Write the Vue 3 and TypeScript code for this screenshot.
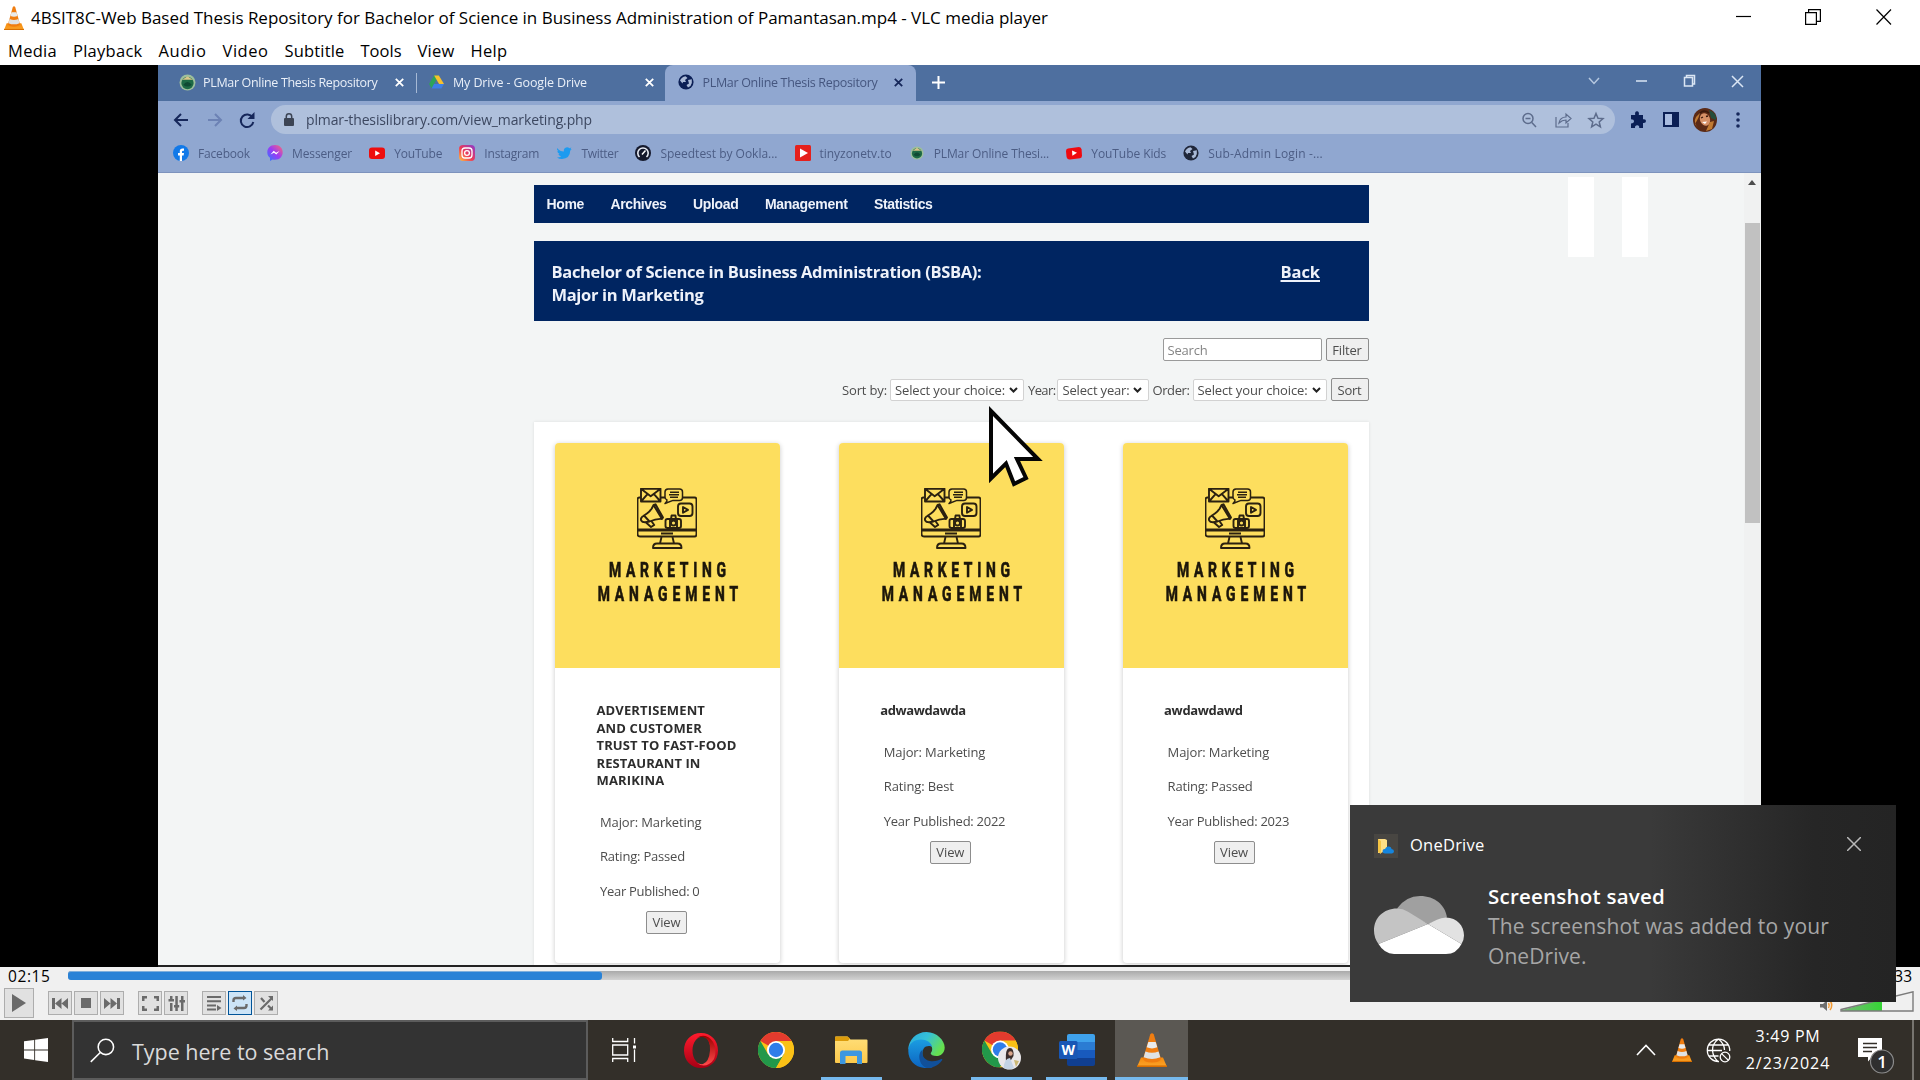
<script setup lang="ts">
import type { Directive } from 'vue'

// Tracks a label out (or in) so that it fills the given advance width.
const vFit: Directive<HTMLElement, number> = {
  mounted(el, binding) {
    el.style.letterSpacing = '0px'
    const natural = el.getBoundingClientRect().width
    const count = (el.textContent ?? '').trim().length
    if (count > 0) el.style.letterSpacing = `${(binding.value - natural) / count}px`
  },
}

interface Label { text: string; w: number }
interface Bookmark extends Label { icon: string }
interface Thesis { title: Label[]; details: Label[] }

const menu: Label[] = [
  { text: 'Media', w: 49 }, { text: 'Playback', w: 69.5 }, { text: 'Audio', w: 48 }, { text: 'Video', w: 46 },
  { text: 'Subtitle', w: 60 }, { text: 'Tools', w: 41 }, { text: 'View', w: 37 }, { text: 'Help', w: 37 },
]

const bookmarks: Bookmark[] = [
  { icon: 'facebook', text: 'Facebook', w: 52 },
  { icon: 'messenger', text: 'Messenger', w: 60 },
  { icon: 'youtube', text: 'YouTube', w: 48 },
  { icon: 'instagram', text: 'Instagram', w: 55 },
  { icon: 'twitter', text: 'Twitter', w: 37 },
  { icon: 'speedtest', text: 'Speedtest by Ookla...', w: 117 },
  { icon: 'tiny', text: 'tinyzonetv.to', w: 72 },
  { icon: 'plmar', text: 'PLMar Online Thesi...', w: 115.5 },
  { icon: 'kids', text: 'YouTube Kids', w: 75 },
  { icon: 'globe', text: 'Sub-Admin Login -...', w: 114.5 },
]

const siteNav: Label[] = [
  { text: 'Home', w: 37.5 }, { text: 'Archives', w: 56 }, { text: 'Upload', w: 45.5 },
  { text: 'Management', w: 82.5 }, { text: 'Statistics', w: 58.5 },
]

const theses: Thesis[] = [
  {
    title: [
      { text: 'ADVERTISEMENT', w: 108.5 }, { text: 'AND CUSTOMER', w: 105.5 }, { text: 'TRUST TO FAST-FOOD', w: 140 },
      { text: 'RESTAURANT IN', w: 104 }, { text: 'MARIKINA', w: 68 },
    ],
    details: [{ text: 'Major: Marketing', w: 101.5 }, { text: 'Rating: Passed', w: 85 }, { text: 'Year Published: 0', w: 99.5 }],
  },
  {
    title: [{ text: 'adwawdawda', w: 85.5 }],
    details: [{ text: 'Major: Marketing', w: 101.5 }, { text: 'Rating: Best', w: 70 }, { text: 'Year Published: 2022', w: 121.5 }],
  },
  {
    title: [{ text: 'awdawdawd', w: 78.5 }],
    details: [{ text: 'Major: Marketing', w: 101.5 }, { text: 'Rating: Passed', w: 85 }, { text: 'Year Published: 2023', w: 121.5 }],
  },
]
</script>

<template>
  <div class="desktop">
    <svg class="symbols" width="0" height="0" aria-hidden="true">
      <defs>
        <linearGradient id="coneBase" x1="0" y1="0" x2="0" y2="1"><stop offset="0" stop-color="#f58a0c" /><stop offset="1" stop-color="#fba52b" /></linearGradient>
        <linearGradient id="ig" x1="0" y1="1" x2="1" y2="0"><stop offset="0" stop-color="#fdc442" /><stop offset=".45" stop-color="#ee3a55" /><stop offset="1" stop-color="#8a3bd0" /></linearGradient>
        <linearGradient id="ms" x1="0" y1="1" x2="1" y2="0"><stop offset="0" stop-color="#2a7bff" /><stop offset=".5" stop-color="#9a3bf5" /><stop offset="1" stop-color="#ff6a70" /></linearGradient>
        <linearGradient id="op" x1="0" y1="0" x2="0" y2="1"><stop offset="0" stop-color="#ff1b2d" /><stop offset="1" stop-color="#a70014" /></linearGradient>
        <linearGradient id="op2" x1="0" y1="0" x2="0" y2="1"><stop offset="0" stop-color="#9c0000" /><stop offset="1" stop-color="#ff4b4b" /></linearGradient>
        <linearGradient id="edTop" x1="0" y1="0" x2="1" y2=".5"><stop offset="0" stop-color="#2aa9dc" /><stop offset=".5" stop-color="#35c1d8" /><stop offset="1" stop-color="#66e04f" /></linearGradient>
        <linearGradient id="edLow" x1="0" y1="0" x2="0" y2="1"><stop offset="0" stop-color="#1b9de2" /><stop offset="1" stop-color="#0c63c0" /></linearGradient>
        <linearGradient id="folder" x1="0" y1="0" x2="0" y2="1"><stop offset="0" stop-color="#ffdf7a" /><stop offset="1" stop-color="#fcc94b" /></linearGradient>
        <linearGradient id="vol" x1="0" y1="0" x2="1" y2="0"><stop offset="0" stop-color="#79b879" /><stop offset="1" stop-color="#35d435" /></linearGradient>
      </defs>
      <symbol id="cone" viewBox="0 0 30 34" preserveAspectRatio="none">
        <path d="M4 24.500h22L30 34H0z" fill="url(#coneBase)" />
        <path d="M0 32.400h30V34H0z" fill="#d96f00" />
        <path d="M13.200 1.500Q15-1 16.800 1.500L24 26Q22.500 29.500 15 29.500T6 26z" fill="#f07d10" />
        <path d="M11.300 9h7.400l1.600 5.300q-5.300 2.200-10.600 0z" fill="#e9ebec" />
        <path d="M8.400 18.500q6.600 2.500 13.200 0l1.700 5.800q-8.300 3.400-16.600 0z" fill="#dfe2e4" />
      </symbol>
      <symbol id="globe" viewBox="0 0 16 16">
        <circle cx="8" cy="8" r="7.600" fill="currentColor" />
        <path d="M2 6.500Q3.500 3 7.500 2.200L9.500 4 7 6l1 2H5l-.5 1.500zM10 6l3.800-.8Q14.500 9 12.500 12L10 13.500 8.500 11 11 9.500z" fill="#a9b9d6" />
      </symbol>
      <symbol id="seal" viewBox="0 0 16 16">
        <circle cx="8" cy="8" r="7.500" fill="#9dbf9c" /><circle cx="8" cy="8.500" r="5.800" fill="#1d6a45" />
        <path d="M3 5.500 8 2l5 3.500z" fill="#d8c58a" /><path d="M4 10q4-5 8 0-4 3.500-8 0" fill="#0f4a33" />
      </symbol>
      <symbol id="chrome" viewBox="0 0 36 36">
        <circle cx="18" cy="18" r="18" fill="#fbc116" />
        <path d="M18 18 2.400 9A18 18 0 0 1 33.600 9z" fill="#e33b2e" />
        <path d="M2.400 9A18 18 0 0 0 18 36l8-14-8-4-7.800 4.500z" fill="#22984a" />
        <path d="M18 9h15.600A18 18 0 0 1 18 36l7.800-13.500z" fill="#fbc116" />
        <circle cx="18" cy="18" r="9" fill="#fff" /><circle cx="18" cy="18" r="7.200" fill="#2f7de9" />
      </symbol>
    </svg>

    <header class="titlebar">
      <svg class="app-icon" width="20" height="24"><use href="#cone" width="20" height="24" /></svg>
      <span v-fit="1017" class="app-title">4BSIT8C-Web Based Thesis Repository for Bachelor of Science in Business Administration of Pamantasan.mp4 - VLC media player</span>
      <svg class="window-buttons" width="156" height="16" viewBox="0 0 156 16" fill="none" stroke="#000" stroke-width="1.200">
        <path d="M0 7.500h15" /><path d="M69.600 3.600h10.800v11.800H69.600zM72.600 3.600V.6h11.800v11.800h-4" /><path d="m140.500.5 14.500 15M155 .5l-14.500 15" />
      </svg>
    </header>
    <nav class="menubar">
      <span v-for="m in menu" :key="m.text" v-fit="m.w">{{ m.text }}</span>
    </nav>

    <main class="stage">
      <section class="browser">
        <div class="tabs">
          <div class="tab first">
            <svg width="17" height="17"><use href="#seal" width="17" height="17" /></svg>
            <span v-fit="174.500">PLMar Online Thesis Repository</span>
            <svg class="x" width="9" height="9" viewBox="0 0 9 9"><path d="m.8.8 7.400 7.400M8.200.8.8 8.200" /></svg>
          </div>
          <div class="tab second">
            <svg width="15" height="14" viewBox="0 0 17 15"><path d="M5.800 0h5.400L6 9.300 3 14.500 0 9.800z" fill="#2da35a" /><path d="M5.800 0h5.400L17 9.800h-5.600z" fill="#f6c02d" /><path d="M5.700 9.800H17l-3 5H3z" fill="#3d7fe6" /></svg>
            <span v-fit="134">My Drive - Google Drive</span>
            <svg class="x" width="9" height="9" viewBox="0 0 9 9"><path d="m.8.8 7.400 7.400M8.200.8.8 8.200" /></svg>
          </div>
          <div class="tab current">
            <svg class="navy" width="16" height="16"><use href="#globe" width="16" height="16" /></svg>
            <span v-fit="175">PLMar Online Thesis Repository</span>
            <svg class="x" width="9" height="9" viewBox="0 0 9 9"><path d="m.8.8 7.400 7.400M8.200.8.8 8.200" /></svg>
          </div>
          <svg class="plus" width="13" height="13" viewBox="0 0 13 13"><path d="M6.500 0v13M0 6.500h13" stroke="#fff" stroke-width="2" /></svg>
          <svg class="chrome-buttons" width="156" height="14" viewBox="0 0 156 14" fill="none" stroke="#dbe6f4" stroke-width="1.500">
            <path d="m1 4 5 5.500L11 4" stroke="#b6c8e0" /><path d="M48 7h11" /><path d="M96.500 3.500h8v8.500h-8zM98.500 3V1.500h8V10H105" /><path d="m144 2 11 11M155 2l-11 11" />
          </svg>
        </div>

        <div class="toolbar">
          <svg class="nav-icons" width="82" height="18" viewBox="0 0 82 18" fill="none" stroke-width="2">
            <path d="M15 9H2.500M8 3 2 9l6 6" stroke="#16275a" /><path d="M35 9h12.500M42 3l6 6-6 6" stroke="#6c82b4" />
            <path d="M79.500 6.500A6.300 6.300 0 1 0 80.300 11" stroke="#16275a" /><path d="M81.500 1v7h-7z" fill="#16275a" />
          </svg>
          <div class="omnibox">
            <svg width="10" height="13" viewBox="0 0 10 13"><rect y="5" width="10" height="8" rx="1" fill="#3c4454" /><path d="M2.300 6V3.500a2.700 2.700 0 0 1 5.400 0V6" fill="none" stroke="#3c4454" stroke-width="1.500" /></svg>
            <span v-fit="286" class="url">plmar-thesislibrary.com/view_marketing.php</span>
            <svg class="omni-icons" width="84" height="18" viewBox="0 0 84 18" fill="none" stroke="#5d6c8c" stroke-width="1.500">
              <circle cx="7" cy="7.500" r="5" /><path d="m10.800 11.500 4.200 4.500M4.500 7.500h5" />
              <path d="M35 6v10h12v-4M38 12q1-6 7-6V3l5 4.500-5 4.500V9q-4 0-7 3z" stroke-width="1.200" />
              <path d="m75 2.500 2 4.700 5 .4-3.800 3.300 1.200 5-4.400-2.700-4.400 2.700 1.200-5L68 7.600l5-.4z" />
            </svg>
          </div>
          <svg class="puzzle" width="16" height="17" viewBox="0 0 16 17"><path d="M1 4h4.200q-.7-3.800 1.800-3.800T8.800 4H13v4.300q3-.6 3 1.700t-3 1.900V17H9.200q.4-2.800-2-2.800T5 17H1v-4.500q3-.2 3-2.200T1 8.200z" fill="#0b1f55" /></svg>
          <svg class="side" width="16" height="15" viewBox="0 0 16 15"><rect x="1" y="1" width="14" height="13" fill="#a9bce0" stroke="#0b1f55" stroke-width="2" /><path d="M9 1h6v13H9z" fill="#0b1f55" /></svg>
          <svg class="face" width="24" height="24" viewBox="0 0 24 24"><circle cx="12" cy="12" r="12" fill="#5b2a16" /><path d="M16 2q8 3 7 10l-5-2z" fill="#254d3b" /><ellipse cx="12" cy="11.500" rx="5" ry="6.500" fill="#d69067" transform="rotate(-20 12 11.500)" /><path d="M2 16Q6 10 7 5L3 9Q0 14 5 20zM13 23l6-2 2-8-4 1z" fill="#c07a32" /><path d="m8 10 2-1M13 8.500l2-.5M7 5q4-4 9 0" stroke="#3a180c" stroke-width="1.300" fill="none" /><path d="m9 14 5-.5-2 2.500z" fill="#fff" /></svg>
          <svg class="dots" width="4" height="16" viewBox="0 0 4 16" fill="#16275a"><circle cx="2" cy="2" r="1.800" /><circle cx="2" cy="8" r="1.800" /><circle cx="2" cy="14" r="1.800" /></svg>
        </div>

        <div class="bookmarks">
          <div v-for="b in bookmarks" :key="b.text" class="bookmark">
            <svg width="16" height="16" viewBox="0 0 16 16">
              <g v-if="b.icon === 'facebook'"><circle cx="8" cy="8" r="8" fill="#1279e8" /><path d="M6.800 16v-5.500H5V8h1.800V6.300q0-2.800 2.800-2.800H11v2.300h-1q-1 0-1 1V8h2l-.4 2.500H9V16z" fill="#fff" /></g>
              <g v-else-if="b.icon === 'messenger'"><path d="M8 0C3 0 .3 3.400.3 7.200c0 2.500 1 4.300 2.700 5.600V16l2.600-1.500q1.200.3 2.400.3c5 0 7.700-3.600 7.700-7.500S13 0 8 0" fill="url(#ms)" /><path d="m3.500 9.500 3.200-3.800 2.400 2L12.500 6 9.300 9.600 7 7.800z" fill="#fff" /></g>
              <g v-else-if="b.icon === 'youtube'"><rect y="2.500" width="16" height="11.500" rx="3" fill="#ee0d0d" /><path d="M6.200 5.500v5.400L11 8.200z" fill="#fff" /></g>
              <g v-else-if="b.icon === 'instagram'"><rect width="16" height="16" rx="4" fill="url(#ig)" /><rect x="3" y="3" width="10" height="10" rx="3" fill="none" stroke="#fff" stroke-width="1.300" /><circle cx="8" cy="8" r="2.400" fill="none" stroke="#fff" stroke-width="1.300" /></g>
              <path v-else-if="b.icon === 'twitter'" d="M1 3q3 3.500 6.800 3.500Q7.500 2.500 11 2.200q1.500 0 2.400 1l2-.6-1 1.700 1.300-.2-1.500 1.600Q14 13.500 6 14q-3 0-5-1.500 2.800 0 4.200-1.300-2.400-.5-2.800-2.200h1.300Q1.300 8 1.300 5.800l1.300.3Q.4 5 1 3" fill="#1d9bf0" />
              <g v-else-if="b.icon === 'speedtest'"><circle cx="8" cy="8" r="8" fill="#15192c" /><path d="M4.500 12A5.200 5.200 0 1 1 11.500 12" fill="none" stroke="#e8ecf4" stroke-width="1.600" /><path d="m7 9.500 3.500-4" stroke="#fff" stroke-width="1.500" /></g>
              <g v-else-if="b.icon === 'tiny'"><rect width="16" height="16" rx="1.500" fill="#e5201c" /><path d="M5 3.500v9L13 8z" fill="#fff" /></g>
              <use v-else-if="b.icon === 'plmar'" href="#seal" x="1" y="1" width="14" height="14" />
              <g v-else-if="b.icon === 'kids'"><path d="M2 3.500 13 2q2.300 0 2.600 2.500l.4 6q0 2.500-2 2.800L4 14.500q-3 .3-3.500-3L0 6q0-2.200 2-2.500" fill="#f0090f" /><path d="m6 5.500.4 5.200L11 7.800z" fill="#fff" /></g>
              <use v-else href="#globe" width="16" height="16" class="dark" />
            </svg>
            <span v-fit="b.w">{{ b.text }}</span>
          </div>
        </div>

        <div class="page">
          <div class="content">
            <nav class="site-nav"><a v-for="n in siteNav" :key="n.text" v-fit="n.w">{{ n.text }}</a></nav>
            <div class="banner">
              <h1><span v-fit="430">Bachelor of Science in Business Administration (BSBA):</span><br><span v-fit="152">Major in Marketing</span></h1>
              <a class="back"><span v-fit="39.500">Back</span></a>
            </div>
            <div class="search-row">
              <div class="field"><span v-fit="40">Search</span></div>
              <div class="btn filter"><span v-fit="29.500">Filter</span></div>
            </div>
            <div class="sort-row">
              <span v-fit="45">Sort by:</span>
              <div class="select s1"><span v-fit="110">Select your choice:</span><svg width="9" height="6" viewBox="0 0 9 6"><path d="m1 1 3.500 3.500L8 1" /></svg></div>
              <span v-fit="27.500">Year:</span>
              <div class="select s2"><span v-fit="67">Select year:</span><svg width="9" height="6" viewBox="0 0 9 6"><path d="m1 1 3.500 3.500L8 1" /></svg></div>
              <span v-fit="37">Order:</span>
              <div class="select s3"><span v-fit="110">Select your choice:</span><svg width="9" height="6" viewBox="0 0 9 6"><path d="m1 1 3.500 3.500L8 1" /></svg></div>
              <div class="btn sort"><span v-fit="24">Sort</span></div>
            </div>

            <div class="panel">
              <article v-for="(t, i) in theses" :key="i" class="card">
                <div class="cover">
                  <svg class="emblem" width="60" height="61" viewBox="0 0 60 61" fill="none" stroke="#2b2110" stroke-width="1.900" stroke-linejoin="round">
                    <path d="M3.500 9.500H2.500q-2 0-2 2V46q0 2.500 2.500 2.500h54.500q2 0 2-2.500V11.500q0-2-2-2H46M24 9.500h4" /><path d="M.5 42h59" stroke-width="2.800" /><path d="M24 45.500h12" />
                    <path d="m24.500 49-1.500 6.500h14L35.500 49M16 60q0-4.500 4-4.500h20.500q4 0 4 4.500z" />
                    <path d="M4 .8h19.500v12.700H4zM4 .8l9.700 7.400L23.500.8M4 13.500l6.500-7.300M23.500 13.500 17 6.200" />
                    <path d="M31 .9h11.500q3 0 3 3v5.500q0 3-3 3H36L28 15.500q2.300-2 2-3.600-2-.8-2-3V4q0-3 3-3.100zM33 4.200h9M32 6.800h10M33 9.300h8" stroke-width="1.500" />
                    <path d="M16.500 17 25 31q-5.500-.6-12.500 2.500L7 27.500Q14.500 23 16.500 17zM16.500 17l2-.7L26 29.500 25 31M7 27.500q-4 2.300-2.800 5 1.500 3 8.300 1M9 34.500l5 4.500 3.200-2-3-4.300" />
                    <rect x="41" y="15.500" width="14.500" height="12.500" rx="3" /><path d="M46 19v5.800l5-2.900z" />
                    <rect x="28.500" y="31" width="15.500" height="9" rx="2" /><path d="M33 31v9M40 31v9M34 31l.6-3.500h3.800L39 31" /><circle cx="36.500" cy="35" r="2.500" />
                  </svg>
                  <svg class="wordmark" width="150" height="46" viewBox="0 0 150 46">
                    <text x="17.600" y="17" textLength="172" transform="scale(.68 1)">MARKETING</text>
                    <text x="1" y="41.500" textLength="206.500" transform="scale(.68 1)">MANAGEMENT</text>
                  </svg>
                </div>
                <h2><template v-for="l in t.title" :key="l.text"><span v-fit="l.w">{{ l.text }}</span><br></template></h2>
                <p v-for="d in t.details" :key="d.text"><span v-fit="d.w">{{ d.text }}</span></p>
                <div class="btn view"><span v-fit="28">View</span></div>
              </article>
            </div>
          </div>
          <div class="scrollbar">
            <svg width="8" height="5" viewBox="0 0 8 5"><path d="M0 5 4 0l4 5z" fill="#4c4c4c" /></svg>
            <div class="thumb" />
          </div>
        </div>
      </section>

      <div class="pause"><i /><i /></div>
      <svg class="pointer" width="58" height="84" viewBox="0 0 58 84"><path d="M4 5v67.500L19 57.500l8 20.500 12-6-9-19H51z" fill="#fff" stroke="#050505" stroke-width="4" /></svg>
    </main>

    <section class="controls">
      <div class="seek">
        <span v-fit="42.500" class="time">02:15</span>
        <div class="track"><div class="done" /></div>
        <span class="time">05:33</span>
      </div>
      <div class="buttons">
        <div class="cb play"><svg width="16" height="18" viewBox="0 0 16 18"><path d="M1 0v18l14-9z" /></svg></div>
        <div class="cb g14"><svg width="16" height="11" viewBox="0 0 16 11"><path d="M0 0h3v11H0zM3 5.500 9.500 0v11zM9.500 5.500 16 0v11z" /></svg></div>
        <div class="cb g2"><svg width="10" height="10" viewBox="0 0 10 10"><path d="M0 0h10v10H0z" /></svg></div>
        <div class="cb g2"><svg width="16" height="11" viewBox="0 0 16 11"><path d="M13 0h3v11h-3zM13 5.500 6.500 0v11zM6.500 5.500 0 0v11z" /></svg></div>
        <div class="cb g14"><svg width="17" height="15" viewBox="0 0 17 15"><path d="M0 0h5v2.500H2.500V5H0zM12 0h5v5h-2.500V2.500H12zM0 10h2.500v2.500H5V15H0zM14.500 10H17v5h-5v-2.500h2.500z" /></svg></div>
        <div class="cb g2"><svg width="17" height="15" viewBox="0 0 17 15"><path d="M2 0h2.500v3H6v2.500H.5V3H2zM2 7h2.500v8H2zM7.300 0h2.500v9h1.400v2.500H9.800V15H7.300v-3.500H6V9h1.300zM13 0h2.500v4H17v2.500h-1.500V15H13V6.500h-1.500V4H13z" /></svg></div>
        <div class="cb g14"><svg width="16" height="15" viewBox="0 0 16 15"><path d="M1 0h14v2H1zM1 4.200h14v2H1zM1 8.400h9v2H1zM1 12.600h9v2H1zM11 9l4.500 3-4.500 3z" /></svg></div>
        <div class="cb g2 on"><svg width="16" height="16" viewBox="0 0 16 16"><path d="M1.500 7V5.500q0-2.500 2.500-2.500h8M14.500 9v1.500q0 2.500-2.500 2.500H4" fill="none" stroke="#6a6a6a" stroke-width="2.400" /><path d="M11 0v5.500L14.500 3zM5 10.500V16l-3.500-2.500z" /></svg></div>
        <div class="cb g2"><svg width="15" height="15" viewBox="0 0 15 15"><path d="m1.500 13.500 11-11M2 2l3.500 4M9 9.500l4 4" fill="none" stroke="#6a6a6a" stroke-width="2.200" /><path d="M9 0h5v5zM9 14.500h5v-5z" /></svg></div>
        <svg class="volume" width="96" height="24" viewBox="0 0 96 24">
          <path d="M0 13h3l4-4v11l-4-3.500H0z" fill="#6e6e6e" /><path d="M8.500 12q1.500 2.500 0 5M10 9.500q3.500 5 0 9.500" fill="none" stroke="#f39a32" stroke-width="1.500" />
          <text x="21" y="10">70%</text>
          <path d="M22 19 62 8v12H22z" fill="url(#vol)" /><path d="M21 18.500 93 .8V20H21z" fill="none" stroke="#7b7b7b" stroke-width="1.400" />
        </svg>
      </div>
    </section>

    <footer class="taskbar">
      <svg class="start" width="24" height="24" viewBox="0 0 24 24" fill="#fff"><path d="M0 3.300 10.200 1.900v9.600H0zM11.100 1.700 24 0v11.500H11.100zM0 12.400h10.200V22L0 20.600zM11.100 12.400H24V24l-12.900-1.800z" /></svg>
      <div class="searchbox">
        <svg width="25" height="25" viewBox="0 0 26 25" fill="none" stroke="#fff" stroke-width="1.600"><circle cx="16.500" cy="8.800" r="8" /><path d="M10.700 14.500.8 24.300" /></svg>
        <span v-fit="197.500">Type here to search</span>
      </div>
      <svg class="taskview" width="25" height="24" viewBox="0 0 25 24" fill="none" stroke="#fff" stroke-width="1.300"><path d="M.7 0v3.500h15V0M.7 24v-3.500h15V24M.7 7h15v10H.7zM22.500 0v5.500M22.500 11.500V24" /><path d="M21 7.500h3v3h-3z" fill="#fff" stroke="none" /></svg>
      <div class="slot opera"><svg width="34" height="35" viewBox="0 0 34 35"><path fill-rule="evenodd" d="M17 0C7 0 0 7.500 0 17.500S7 35 17 35s17-7.500 17-17.500S27 0 17 0m2 3.500c4.500 0 7.500 6 7.500 14s-3 14-7.500 14c-6 0-10.500-6-10.500-14S13 3.500 19 3.500" fill="url(#op)" /><path d="M13 5q5-4 11-1 7 4 7.500 13.500T25 31q-6 3.500-12-1 3 1.500 6 1 6-2 7-13.500T19 4q-3-.5-6 1" fill="url(#op2)" /></svg></div>
      <div class="slot"><svg width="36" height="36"><use href="#chrome" width="36" height="36" /></svg></div>
      <div class="slot open"><svg width="33" height="28" viewBox="0 0 33 28"><path d="M0 1.500Q0 .5 1 .5h11.500l3 3H31.500q1 0 1 1V26q0 1-1 1H1q-1 0-1-1z" fill="url(#folder)" /><path d="M0 1.500Q0 .5 1 .5h11.500l2.500 2-2 2.500H0z" fill="#dc9c0b" /><path d="M5 28V17q0-2.500 2.500-2.500h17q2.500 0 2.500 2.500v11h-5v-8H10.500v8z" fill="#3c97e0" /></svg></div>
      <div class="slot"><svg width="37" height="36" viewBox="0 0 37 36"><path d="M.3 18C.3 8 8 0 18.500 0S36.700 8.500 36.700 15.500c0 6-4.500 8.500-8 8.500-4 0-6-1.500-6-2.500s1.500-1.500 1.500-4.500c0-4-4.500-6.500-9-6.500C8.500 10.500 2 13 .3 18" fill="url(#edTop)" /><path d="M.3 19c0-7 5.500-11.500 12.700-11.500 5.500 0 10.500 3 11.200 7.500-2-1.500-6.500-1.500-8.500 1.500-3.500 6 .5 17 8.800 18.700C10.500 39 .3 30 .3 19" fill="url(#edLow)" /><path d="M14.800 17.500C13 21.500 15.500 28 22 29c5 .7 9-.8 11.200-2 1-.4 1.400.4.9 1.200C30 34 24 36 19.500 36 12 35 8 22 14.800 17.500" fill="#11509a" /></svg></div>
      <div class="slot open avatar"><svg width="40" height="40" viewBox="0 0 40 40"><use href="#chrome" y="1.500" width="36" height="36" /><circle cx="27.500" cy="28" r="11.500" fill="#e9e7ea" /><path d="M24 31q-1-13 4-13 4 0 3.500 8L29 30z" fill="#3a2c2b" /><circle cx="28.500" cy="23.500" r="2.200" fill="#d9a58d" /><path d="M21.500 38q1-10 6.500-10l4 10q-5 2.500-10.500 0" fill="#c3d3e4" /><path d="m32 30 5 1-3 6z" fill="#cbb873" /></svg></div>
      <div class="slot open"><svg width="36" height="32" viewBox="0 0 36 32"><path d="M8 2Q8 0 10 0h24q2 0 2 2v6H8z" fill="#3fa2ec" /><path d="M8 8h28v8H8z" fill="#2b7cd3" /><path d="M8 16h28v8H8z" fill="#185abd" /><path d="M8 24h28v6q0 2-2 2H10q-2 0-2-2z" fill="#103f91" /><rect y="7" width="18.500" height="18" rx="1.500" fill="#1857b5" /><text x="9.200" y="21" text-anchor="middle" fill="#fff" font-size="14" font-weight="700">W</text></svg></div>
      <div class="slot open active"><svg width="30" height="34"><use href="#cone" width="30" height="34" /></svg></div>

      <svg class="caret" width="20" height="12" viewBox="0 0 20 12" fill="none" stroke="#fff" stroke-width="1.600"><path d="m1 11 9-9.500L19 11" /></svg>
      <svg class="tray-cone" width="20" height="24" viewBox="0 0 20 24"><use href="#cone" width="20" height="24" /></svg>
      <svg class="net" width="25" height="25" viewBox="0 0 25 25" fill="none" stroke="#fff" stroke-width="1.300"><path d="M13 23.500A11.200 11.200 0 1 1 23.700 13M12.500 1Q6 6 6.500 12.500T12 23.500M12.500 1Q18.500 6 18.500 12M2.500 7h20M1 12.500h15M2.500 18h10" /><circle cx="19" cy="19" r="4.800" /><path d="m15.600 15.600 6.800 6.800" /></svg>
      <div class="clock"><span v-fit="65">3:49 PM</span><span v-fit="84.500">2/23/2024</span></div>
      <svg class="notice" width="38" height="38" viewBox="0 0 38 38"><path d="M0 0h24v19H14l-4 4.500V19H0z" fill="#fff" /><path d="M5 5.500h14M5 9.500h14M5 13.500h9" stroke="#332f29" stroke-width="1.300" /><circle cx="24" cy="23.500" r="11.500" fill="#2f2f2f" stroke="#8c8c8c" stroke-width="1.200" /><text x="24" y="29.500" text-anchor="middle" fill="#fff" font-size="17" font-weight="600">1</text></svg>
      <div class="peek" />
    </footer>

    <aside class="toast">
      <div class="toast-head">
        <div class="tile"><svg width="16" height="16" viewBox="0 0 16 16"><path d="M0 1h7l2 1v10l-6 3H0z" fill="#ffdf86" /><path d="M0 1 3 3v13L0 14z" fill="#f6c544" /><path d="M7 15.500q-2.500 0-2.500-2.300T7 11q1-3 4-2.500 2.300.3 2.600 2.500 2.400.2 2.400 2.200t-2 2.300z" fill="#1585dd" /></svg></div>
        <span v-fit="74.500">OneDrive</span>
        <svg class="close" width="14" height="14" viewBox="0 0 14 14"><path d="m0 0 14 14M14 0 0 14" stroke="#b9b9b9" stroke-width="1.500" /></svg>
      </div>
      <div class="toast-body">
        <svg width="90" height="58" viewBox="0 0 90 58"><path d="M23 12.500Q32 0 46 0C61 0 71 9 73 21.500L54 28z" fill="#a0a0a0" /><path d="M4.500 48A22 22 0 0 1 0 34.500C0 22 9.500 12.500 23 12.500q6 0 11 3.200L54 28z" fill="#c4c4c4" /><path d="m54 28 9-4.200q4-2 9-2.200C83 21.600 90 30 90 39.500q0 4.500-2.500 8.500z" fill="#e2e2e2" /><path d="M4.500 48 54 28l33.500 20Q82.500 58 72 58H20Q10 57.500 4.500 48" fill="#fff" /></svg>
        <div><h3><span v-fit="177">Screenshot saved</span></h3><p><span v-fit="341">The screenshot was added to your</span><br><span v-fit="98.500">OneDrive.</span></p></div>
      </div>
    </aside>
  </div>
</template>

<style>
html, body { margin: 0; overflow: hidden; }
</style>

<style scoped>
.desktop { position: relative; width: 1920px; height: 1080px; overflow: hidden; display: flex; flex-direction: column; background: #fff; color: #000; font-family: "Open Sans", "Noto Sans", sans-serif; white-space: nowrap; }
.desktop * { box-sizing: border-box; }
svg { flex: none; display: block; }
.symbols { position: absolute; }
span { flex: none; }

.titlebar { display: flex; align-items: center; height: 35px; padding: 0 28px 0 4px; font-size: 17px; flex: none; }
.app-title { margin-left: 7px; }
.window-buttons { margin: 0 0 2px auto; }
.menubar { display: flex; align-items: center; gap: 16px; height: 30px; padding-left: 8px; font-size: 16.500px; flex: none; }

.stage { position: relative; height: 902px; flex: none; background: #000; padding-left: 158px; }
.browser { width: 1603px; height: 902px; display: flex; flex-direction: column; overflow: hidden; border-bottom: 2px solid #222; filter: blur(.45px); }

.tabs { height: 36px; display: flex; align-items: stretch; background: #4e6f9f; font-size: 12.500px; color: #e9eff8; flex: none; }
.tab { display: flex; align-items: center; padding-bottom: 2px; }
.tab .x { fill: none; stroke: #fff; stroke-width: 1.800; }
.first { width: 258px; padding-left: 20.500px; }
.first span { margin-left: 7.500px; }
.first .x { margin-left: 17px; }
.second { width: 249px; padding-left: 13px; position: relative; }
.second::before { content: ""; position: absolute; left: 0; top: 8px; width: 1px; height: 20px; background: #a6b9d5; }
.second span { margin-left: 9px; }
.second .x { margin-left: 58px; }
.current { width: 251px; padding-left: 13px; background: #90a7d0; border-radius: 8px 8px 0 0; color: #45567f; }
.current span { margin-left: 8.500px; }
.current .x { margin-left: 16.500px; stroke: #16275a; }
.navy { color: #0b1f55; }
.dark { color: #20273a; }
.plus { align-self: center; margin: 0 0 2px 16px; }
.chrome-buttons { margin: 9px 17.500px 0 auto; }

.toolbar { height: 37px; display: flex; align-items: center; background: #90a7d0; padding-left: 15px; flex: none; }
.omnibox { width: 1344px; height: 29px; margin-left: 16px; border-radius: 15px; background: #afc0dc; display: flex; align-items: center; padding-left: 13px; color: #3c4760; }
.url { margin-left: 12px; font-size: 14px; }
.omni-icons { margin: 0 10px 0 auto; }
.puzzle { margin-left: 15px; }
.side { margin-left: 17px; }
.face { margin-left: 14px; }
.dots { margin-left: 19px; }

.bookmarks { height: 35px; display: flex; align-items: center; gap: 17.100px; padding: 0 0 3.500px 15px; background: #90a7d0; border-bottom: 1px solid #7d93bd; font-size: 12px; color: #4c5d85; flex: none; }
.bookmark { display: flex; align-items: center; gap: 9px; }

.page { flex: 1; min-height: 0; display: flex; justify-content: space-between; background: #f3f5f5; }
.content { width: 835px; margin-left: 375.500px; padding-top: 12px; color: #4d4d4d; font-size: 13px; }
.site-nav { height: 38px; display: flex; align-items: center; gap: 26.500px; padding: 0 0 1px 13px; background: #002561; color: #eef2fa; font: bold 14px "Liberation Sans", Arial, sans-serif; }
.banner { height: 80px; margin-top: 18px; padding: 19px 48.500px 0 18px; display: flex; justify-content: space-between; background: #002561; color: #eef2fa; font-size: 16.500px; font-weight: 700; }
.banner h1 { margin: 0; font-size: 16.500px; line-height: 23px; }
.back { line-height: 23px; text-decoration: underline; text-underline-offset: 2px; text-decoration-thickness: 1.500px; }
.search-row { display: flex; justify-content: flex-end; gap: 4px; margin-top: 17px; }
.field { width: 159px; height: 23px; padding-left: 4px; display: flex; align-items: center; background: #fff; border: 1.500px solid #9a9a9a; border-radius: 2px; color: #858585; }
.btn { height: 23px; display: flex; align-items: center; justify-content: center; background: #efefef; border: 1.500px solid #8d8d8d; border-radius: 2px; }
.filter { width: 43px; }
.sort-row { display: flex; align-items: center; justify-content: flex-end; margin-top: 17px; height: 23px; }
.select { height: 22px; padding-left: 4px; display: flex; align-items: center; background: #fff; border: 1px solid #d2d2d2; border-radius: 2px; }
.select svg { margin-left: 4px; fill: none; stroke: #222; stroke-width: 2; }
.s1 { width: 134px; margin: 0 4px 0 3px; }
.s2 { width: 92px; margin: 0 3px 0 2px; }
.s3 { width: 134px; margin: 0 4px 0 3px; }
.sort { width: 38px; }

.panel { height: 560px; margin-top: 21px; padding: 20.500px 21.500px; display: flex; align-items: flex-start; gap: 58.800px; background: #fff; box-shadow: 0 0 3px rgba(0, 0, 0, .1); }
.card { width: 225px; height: 520px; flex: none; border-radius: 4px; background: #fff; box-shadow: 0 1px 5px rgba(0, 0, 0, .22); overflow: hidden; }
.cover { height: 225px; background: #fdde5e; padding: 45px 0 0 42px; }
.emblem { margin-left: 40px; }
.wordmark { margin-top: 11px; overflow: visible; }
.wordmark text { font-family: Roboto, sans-serif; font-size: 20.500px; font-weight: 700; fill: #1c160a; stroke: #1c160a; stroke-width: .7px; }
.card h2 { margin: 34.500px 0 15.500px 41.500px; font-size: 13px; line-height: 17.500px; color: #2d2d2d; }
.card p { margin: 0 0 0 45px; height: 34.300px; line-height: 34.300px; }
.view { width: 41px; margin: 3px 0 0 91px; }

.scrollbar { width: 17px; padding: 7px 1px 0 0; display: flex; flex-direction: column; align-items: center; background: #f0f1f1; }
.thumb { width: 15px; height: 300px; margin-top: 38px; background: #c1c1c1; }

.pause { position: absolute; left: 1568px; top: 112px; display: flex; gap: 28px; }
.pause i { width: 26px; height: 80px; background: #fff; }
.pointer { position: absolute; left: 986.500px; top: 341px; }

.controls { height: 53px; flex: none; background: #f0f0f0; }
.seek { height: 21px; padding: 0 8px; display: flex; align-items: center; font-size: 15.500px; }
.seek .time { margin-bottom: 3.500px; }
.track { flex: 1; height: 9px; margin: 0 18px 3.500px 17.500px; background: linear-gradient(#aaa, #d2d2d2); border-radius: 3px; }
.done { width: 534px; height: 9px; background: #2a82d6; border-top: 1px solid #7faedb; border-radius: 3px; }
.buttons { height: 30px; display: flex; align-items: center; padding-left: 4px; }
.cb { width: 24px; height: 24px; background: #e1e1e1; border: 1px solid #adadad; display: flex; align-items: center; justify-content: center; fill: #6a6a6a; }
.play { width: 30px; height: 30px; }
.g14 { margin-left: 14px; }
.g2 { margin-left: 2px; }
.on { background: #cce4f7; border-color: #005499; }
.volume { margin: 0 4px 0 auto; font-size: 14px; fill: #666; }

.taskbar { height: 60px; flex: none; display: flex; align-items: center; background: #332f29; color: #fff; }
.start { margin: 0 24px; }
.searchbox { width: 516px; height: 60px; display: flex; align-items: center; padding-left: 16px; background: #333; border: 2px solid #5c5c5c; color: #dadada; font-size: 21.500px; }
.searchbox span { margin-left: 17px; padding-top: 2px; }
.taskview { margin: 0 11px 0 24px; }
.slot { width: 61px; height: 60px; margin-left: 14.300px; display: flex; align-items: center; justify-content: center; }
.opera { margin-left: 22px; }
.open { border-bottom: 3px solid #76b9ed; padding-top: 3px; }
.active { width: 73px; margin-left: 8px; background: #5b5853; }
.caret { margin-left: auto; }
.tray-cone { margin-left: 16px; }
.net { margin-left: 14px; }
.clock { width: 86px; margin-left: 14px; display: flex; flex-direction: column; align-items: center; font-size: 16px; line-height: 27.500px; }
.notice { margin: 14px 0 0 27px; }
.peek { width: 2px; height: 60px; margin: 0 6px 0 16px; background: #77746f; }

.toast { position: absolute; left: 1350px; top: 805px; width: 546px; height: 197px; background: linear-gradient(90deg, #3a3a3a 55%, #262626 85%, #242424); color: #fff; padding: 29px 35px 0 24px; }
.toast-head { display: flex; align-items: center; height: 24px; font-size: 16.500px; }
.tile { width: 24px; height: 24px; display: flex; align-items: center; justify-content: center; background: #484642; }
.toast-head span { margin: 0 0 3px 12px; }
.close { margin: -4px 0 0 auto; }
.toast-body { display: flex; margin-top: 23px; }
.toast-body > svg { margin: 15px 24px 0 0; }
.toast h3 { margin: 0; font-size: 20.500px; font-weight: 600; line-height: 30px; }
.toast p { margin: 0; font-size: 21px; line-height: 30px; color: #a6a6a6; }
</style>
